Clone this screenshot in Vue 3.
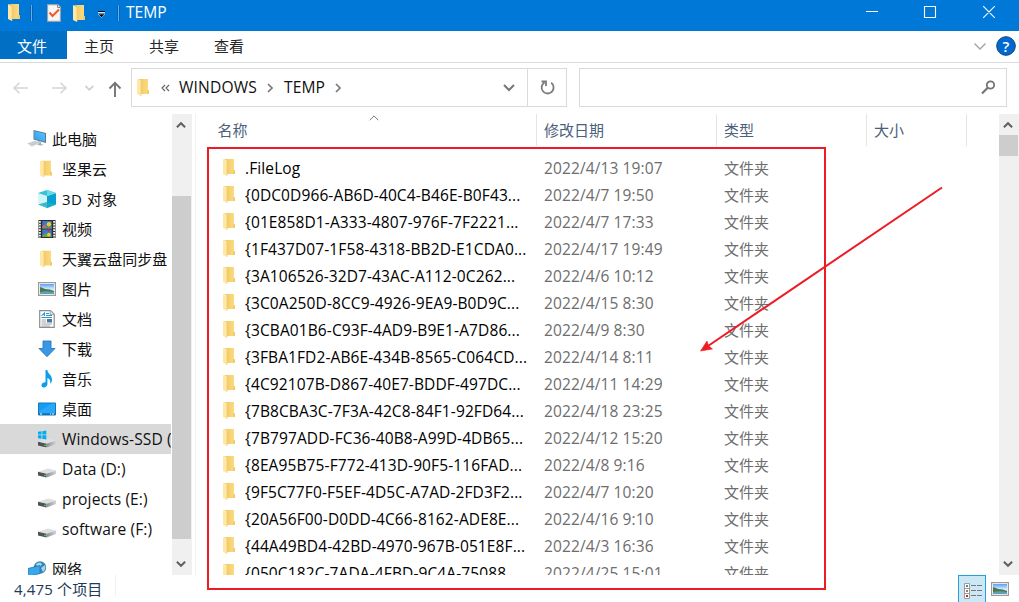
<script setup>
const tabs = ['主页', '共享', '查看']
const places = [
  { name: '坚果云', icon: 'folder' },
  { name: '3D 对象', icon: 'cube', mixed: true },
  { name: '视频', icon: 'video' },
  { name: '天翼云盘同步盘', icon: 'folder' },
  { name: '图片', icon: 'picture' },
  { name: '文档', icon: 'document' },
  { name: '下载', icon: 'download' },
  { name: '音乐', icon: 'music' },
  { name: '桌面', icon: 'desktop' },
  { name: 'Windows-SSD (C:)', icon: 'system', latin: true, active: true },
  { name: 'Data (D:)', icon: 'drive', latin: true },
  { name: 'projects (E:)', icon: 'drive', latin: true },
  { name: 'software (F:)', icon: 'drive', latin: true },
]
const files = [
  ['.FileLog', '2022/4/13 19:07'],
  ['{0DC0D966-AB6D-40C4-B46E-B0F43...', '2022/4/7 19:50'],
  ['{01E858D1-A333-4807-976F-7F2221...', '2022/4/7 17:33'],
  ['{1F437D07-1F58-4318-BB2D-E1CDA0...', '2022/4/17 19:49'],
  ['{3A106526-32D7-43AC-A112-0C262...', '2022/4/6 10:12'],
  ['{3C0A250D-8CC9-4926-9EA9-B0D9C...', '2022/4/15 8:30'],
  ['{3CBA01B6-C93F-4AD9-B9E1-A7D86...', '2022/4/9 8:30'],
  ['{3FBA1FD2-AB6E-434B-8565-C064CD...', '2022/4/14 8:11'],
  ['{4C92107B-D867-40E7-BDDF-497DC...', '2022/4/11 14:29'],
  ['{7B8CBA3C-7F3A-42C8-84F1-92FD64...', '2022/4/18 23:25'],
  ['{7B797ADD-FC36-40B8-A99D-4DB65...', '2022/4/12 15:20'],
  ['{8EA95B75-F772-413D-90F5-116FAD...', '2022/4/8 9:16'],
  ['{9F5C77F0-F5EF-4D5C-A7AD-2FD3F2...', '2022/4/7 10:20'],
  ['{20A56F00-D0DD-4C66-8162-ADE8E...', '2022/4/16 9:10'],
  ['{44A49BD4-42BD-4970-967B-051E8F...', '2022/4/3 16:36'],
  ['{050C182C-7ADA-4FBD-9C4A-75088...', '2022/4/25 15:01'],
]
</script>

<template>
  <div class="window">
    <svg class="defs" width="0" height="0">
      <defs>
        <linearGradient id="gold" x1="0" x2="1"><stop offset="0" stop-color="#efc765" /><stop offset="1" stop-color="#fddc82" /></linearGradient>
        <linearGradient id="sky" x1="0" y1="0" x2="0" y2="1"><stop offset="0" stop-color="#5f9df5" /><stop offset=".5" stop-color="#cfeafc" /><stop offset="1" stop-color="#e8f6fb" /></linearGradient>
        <linearGradient id="screen" x1="0" y1="1" x2="1" y2="0"><stop offset="0" stop-color="#2f9df4" /><stop offset="1" stop-color="#59c4ff" /></linearGradient>
        <linearGradient id="metal" x1="0" x2="1"><stop offset="0" stop-color="#8b8d90" /><stop offset="1" stop-color="#d3d4d6" /></linearGradient>
        <symbol id="folder" viewBox="0 0 12 17">
          <path d="M1 0H11V11.5H12V15H4V2z" fill="url(#gold)" />
          <path d="M0 0L4 2V17L0 15z" fill="#ffe8a6" />
          <path d="M4 2V17" stroke="#edc665" stroke-width=".6" />
          <path d="M10 15V11.3H12V15z" fill="#f2cb68" />
        </symbol>
        <symbol id="cube" viewBox="0 0 18 18">
          <path d="M0 3L9 6V18L0 14.5z" fill="#a9e9ee" /><path d="M0 3L9 6V12L0 14.5z" fill="#d4f5f5" />
          <path d="M9 6L18 3V14.5L9 18z" fill="#0a9fd0" /><path d="M9 12L18 14.5L9 18L0 14.5z" fill="#1cafc0" opacity=".8" />
          <path d="M0 3L9 0L18 3L9 6z" fill="#36c3d4" /><path d="M9 6L9 0L18 3z" fill="#66dbe6" />
        </symbol>
        <symbol id="video" viewBox="0 0 18 19">
          <path d="M0 0H18V19H0z" fill="#2d2d2d" />
          <path d="M1.5 1V19M16.5 1V19" stroke="#eee" stroke-width="2" stroke-dasharray="1.8 1.1" />
          <path d="M4 1H14V9H4zM4 10H14V18H4z" fill="#3977d5" />
          <path d="M4 7Q7 3 9 8L14 7V9H4zM4 16L8 14L14 17V18H4z" fill="#64a63b" />
          <circle cx="11" cy="4.5" r="2.3" fill="#f5ca24" /><circle cx="6" cy="7" r="1.6" fill="#e75a66" />
          <path d="M8 10H13L11 12.5z" fill="#d52b20" /><circle cx="11" cy="15.5" r="2" fill="#e8c634" />
        </symbol>
        <symbol id="picture" viewBox="0 0 18 14">
          <path d="M.6 .6H17.4V13.4H.6z" fill="#fff" stroke="#9a9a9a" stroke-width="1.2" />
          <path d="M2 2H16V12H2z" fill="url(#sky)" />
          <path d="M2 5Q5 6 7 7Q12 7 16 9V10L2 10.5z" fill="#49784d" />
          <path d="M2 10Q9 8.5 16 10V12H2z" fill="#609fb8" />
        </symbol>
        <symbol id="document" viewBox="0 0 16 18">
          <path d="M.7 .7H11.5L15.2 4.2V17.3H.7z" fill="#fff" stroke="#8d8d8d" stroke-width="1.2" />
          <path d="M11 .5V4.5H15" fill="#ddd" stroke="#999" stroke-width=".8" />
          <path d="M2.5 6L5.5 2.5V6M3.7 4.7H5.5M7 3.5H10M7 5.5H13M2.5 7.5H13" fill="none" stroke="#2d94d1" />
          <path d="M2.5 10H7M2.5 12H7M2.5 14H13M2.5 16H11" stroke="#999" stroke-width=".9" /><path d="M8 9H13V12.5H8z" fill="#4778a5" />
        </symbol>
        <symbol id="download" viewBox="0 0 18 17"><path d="M5 .5H13V8H17L9 16.2L1 8H5z" fill="#3b96e4" stroke="#2879c1" stroke-width=".9" /></symbol>
        <symbol id="music" viewBox="0 0 18 18"><path d="M7.5 0H9.3C9.8 4 14 5 14 9.5C14 11.5 13.3 13 12.2 13.8C12.8 10.5 11.5 8.5 9.4 8V14C9.4 16 7.5 17.5 5.8 17.5C2.6 17.5 2.4 12.3 7.5 12.2z" fill="#0d9de9" /></symbol>
        <symbol id="desktop" viewBox="0 0 18 13"><path d="M.5 .5H17.5V12.5H.5z" fill="#159cf5" stroke="#1677b5" /><path d="M1 9L14 1H17V11H1z" fill="#38aef9" opacity=".65" /><path d="M1 11.5H17" stroke="#075d99" /><path d="M2 11.5H4M12 11.5H13M14 11.5H16" stroke="#fff" /></symbol>
        <symbol id="drive" viewBox="0 0 18 17">
          <path d="M0 11.3L10 8L18 10L8.5 13.2z" fill="#dedfe1" /><path d="M0 11.3L8.5 13.2V17L0 15z" fill="#505154" />
          <path d="M8.5 13.2L18 10V13.6L8.5 17z" fill="url(#metal)" /><path d="M6 14.3H8V15.6H6z" fill="#36ce5b" />
        </symbol>
        <symbol id="system" viewBox="0 0 18 17"><use href="#drive" width="18" height="17" /><path d="M0 1.3L3.5 .8V4H0zM4.3 .7L8.3 0V4H4.3zM0 4.8H3.5V8.2L0 7.7zM4.3 4.8H8.3V9L4.3 8.3z" fill="#00adef" /></symbol>
        <symbol id="pc" viewBox="0 0 20 18">
          <path d="M6.5 0L19 3V13L6.5 9.5z" fill="#65747f" /><path d="M7.3 1L18 3.7V11.8L7.3 8.8z" fill="url(#screen)" />
          <path d="M11 11L14 12V14L17 15L13 15.5L9 14L11 13z" fill="#a5b0b8" /><path d="M0 13.5L9 10.5L13 13L5 16.7z" fill="#d0d8dd" /><path d="M2 13.5L9 11.5M4 15L11 12.5" stroke="#9caab1" stroke-width=".6" stroke-dasharray="1 .5" />
        </symbol>
        <symbol id="network" viewBox="0 0 18 17">
          <circle cx="12" cy="6.5" r="6.2" fill="#3c83b3" /><path d="M8 3Q12 0 14 3L12 6L9 5zM13 7L17 4Q18.5 8 15 11z" fill="#a5d5e6" />
          <path d="M0 7.5L12 4.5V12.5L0 15.5z" fill="#39a7ec" stroke="#1878b5" stroke-width=".8" /><path d="M4 15L8 14V16L4 16.5z" fill="#8197a4" />
        </symbol>
        <symbol id="up" viewBox="0 0 10 8"><path d="M.9 6.3L5 2.2L9.1 6.3" fill="none" stroke="#606060" stroke-width="2" /></symbol>
        <symbol id="down" viewBox="0 0 10 8"><path d="M.9 1.7L5 5.8L9.1 1.7" fill="none" stroke="#606060" stroke-width="2" /></symbol>
      </defs>
    </svg>

    <header class="titlebar">
      <svg class="quick" width="124" height="31" viewBox="0 0 124 31">
        <use href="#folder" x="8" y="4" width="12" height="17" />
        <path d="M31.5 5V21M118.5 5V21" stroke="#064f96" stroke-width="2" /><path d="M31.5 5V21M118.5 5V21" stroke="#69ade8" />
        <path d="M47.6 4.6H58L60.4 7V21.4H47.6z" fill="#f7f7f7" stroke="#9ba2a8" stroke-width="1.1" /><path d="M57.5 5V7.5H60" fill="none" stroke="#888" />
        <path d="M49.5 12.5L52.5 16L59 9.5" fill="none" stroke="#f15a22" stroke-width="2" />
        <use href="#folder" x="73" y="5" width="12" height="17" />
        <path d="M98 11.5H105" stroke="#000" /><path d="M98 12.5H105" stroke="#fff" opacity=".8" /><path d="M98 14H105L101.5 17.5z" fill="#000" stroke="#fff" stroke-width=".5" />
      </svg>
      <span class="title">TEMP</span>
      <svg class="controls" width="154" height="31" viewBox="865 0 154 31" fill="none" stroke="#fff" stroke-width="1.1">
        <path d="M866 11.5H878M924.5 6.5H935.5V17.5H924.5zM983.2 6.2L994.8 17.8M994.8 6.2L983.2 17.8" />
      </svg>
    </header>

    <nav class="ribbon">
      <span class="file-tab">文件</span>
      <span v-for="tab in tabs" :key="tab" class="tab">{{ tab }}</span>
      <svg class="ribbon-end" width="49" height="31" viewBox="970 31 49 31">
        <path d="M974.5 43.5L980 49L985.5 43.5" fill="none" stroke="#a1a1a1" stroke-width="1.3" />
        <circle cx="1006" cy="46" r="9.3" fill="#0469cf" stroke="#07437d" />
        <text x="1006" y="51.5" text-anchor="middle" fill="#fff" class="help">?</text>
      </svg>
    </nav>

    <div class="navigation">
      <svg class="history" width="131" height="51" viewBox="0 63 131 51" fill="none">
        <path d="M28 88H14M19.5 82.8L14 88L19.5 93.2M52 88H66M60.5 82.8L66 88L60.5 93.2" stroke="#d5d5d5" stroke-width="1.5" />
        <path d="M85.5 86L89.3 89.8L93.2 86" stroke="#d0d0d0" stroke-width="1.8" />
        <path d="M115 97V83M109.5 88.5L115 82.8L120.5 88.5" stroke="#747474" stroke-width="1.9" />
      </svg>
      <div class="address">
        <svg class="address-folder" width="12" height="17"><use href="#folder" width="12" height="17" /></svg>
        <svg class="guillemet" width="9" height="8" viewBox="0 0 9 8"><path d="M4 1L1 4L4 7M8 1L5 4L8 7" fill="none" stroke="#666" stroke-width="1.2" /></svg>
        <span class="crumb root">WINDOWS</span>
        <svg class="chev" width="7" height="10" viewBox="0 0 7 10"><path d="M1 1L5 5L1 9" fill="none" stroke="#777" stroke-width="1.7" /></svg>
        <span class="crumb leaf">TEMP</span>
        <svg class="chev" width="7" height="10" viewBox="0 0 7 10"><path d="M1 1L5 5L1 9" fill="none" stroke="#777" stroke-width="1.7" /></svg>
        <svg class="address-down" width="12" height="8" viewBox="0 0 12 8"><path d="M1 1L6 6L11 1" fill="none" stroke="#777" stroke-width="2" /></svg>
        <div class="refresh"><svg width="16" height="17" viewBox="0 0 16 17"><path d="M11.2 3.7A6 6 0 1 1 4.5 3.4M1.5 2.5H6V7" fill="none" stroke="#7b7b7b" stroke-width="1.8" /></svg></div>
      </div>
      <div class="search">
        <svg width="15" height="15" viewBox="0 0 15 15" fill="none" stroke="#747474"><circle cx="9.5" cy="5" r="3.7" stroke-width="1.8" /><path d="M6.7 7.8L1 13.5" stroke-width="2.2" /></svg>
      </div>
    </div>

    <main class="body">
      <aside class="sidebar">
        <div class="place computer"><svg width="20" height="18"><use href="#pc" width="20" height="18" /></svg><span>此电脑</span></div>
        <div v-for="(place, i) in places" :key="i" class="place child" :class="{ active: place.active, latin: place.latin, mixed: place.mixed }">
          <svg class="place-icon" width="20" height="20" viewBox="0 0 20 20">
            <use :href="'#' + place.icon" :x="place.icon === 'folder' ? 3 : 1" :y="place.icon === 'folder' ? 1.5 : 1" :width="place.icon === 'folder' ? 12 : 18" :height="place.icon === 'folder' ? 17 : 18" />
          </svg>
          <span>{{ place.name }}</span>
        </div>
        <div class="place network"><svg width="18" height="17"><use href="#network" width="18" height="17" /></svg><span>网络</span></div>
      </aside>
      <div class="scroll side-scroll"><svg width="10" height="8"><use href="#up" width="10" height="8" /></svg><i class="thumb"></i><svg width="10" height="8"><use href="#down" width="10" height="8" /></svg></div>
      <section class="listing">
        <div class="columns">
          <span class="column name">名称<svg class="sort" width="10" height="6" viewBox="0 0 10 6"><path d="M.7 5.2L5 .9L9.3 5.2" fill="none" stroke="#777" /></svg></span>
          <span class="column">修改日期</span><span class="column">类型</span><span class="column">大小</span>
        </div>
        <div class="rows">
          <div v-for="file in files" :key="file[0]" class="row">
            <svg width="12" height="17"><use href="#folder" width="12" height="17" /></svg>
            <span class="filename">{{ file[0] }}</span><span class="date">{{ file[1] }}</span><span class="type">文件夹</span>
          </div>
        </div>
      </section>
      <div class="scroll list-scroll"><svg width="10" height="8"><use href="#up" width="10" height="8" /></svg><i class="thumb"></i><svg width="10" height="8"><use href="#down" width="10" height="8" /></svg></div>
    </main>

    <footer class="status">
      <span class="count">4,475 个项目</span>
      <span class="view selected"><svg width="18" height="17" viewBox="0 0 18 17">
        <path d="M.5 .5H5.5V15.5H.5zM.5 5.5H5.5M.5 10.5H5.5" fill="#fff" stroke="#9c9c9c" /><path d="M7 2.5H12M13 2.5H18M7 7.5H12M13 7.5H18M7 12.5H12M13 12.5H18" stroke="#777" />
        <path d="M2 2H4V4H2z" fill="#4a86b8" /><path d="M2 7H4V9H2z" fill="#b17855" /><path d="M2 12H4V14H2z" fill="#cf2b20" />
      </svg></span>
      <span class="view"><svg width="18" height="14"><use href="#picture" width="18" height="14" /></svg></span>
    </footer>

    <svg class="annotation" width="1019" height="602" viewBox="0 0 1019 602">
      <path d="M208 148H825V589H208z" fill="none" stroke="#ed1c24" stroke-width="2" />
      <path d="M942 187.5L708 346" stroke="#ed1c24" stroke-width="2" /><path d="M700.5 351L707 341L708.5 345.8L712.5 349z" fill="#ed1c24" stroke="#ed1c24" stroke-width=".6" />
    </svg>
  </div>
</template>

<style>
body { margin: 0; overflow: hidden; background: #fff; }
</style>

<style scoped>
.window { position: relative; width: 1019px; height: 602px; overflow: hidden; display: flex; flex-direction: column; background: #fff; color: #111; font: 15px "Open Sans", "Noto Sans CJK SC", sans-serif; }
.window * { box-sizing: border-box; }
.window svg { display: block; flex: none; }
.window .defs { position: absolute; }
.titlebar { height: 31px; flex: none; display: flex; background: #0078d7; color: #fff; }
.title { margin-left: 2px; line-height: 25px; font-size: 15.6px; }
.controls { margin-left: auto; }
.ribbon { height: 32px; flex: none; display: flex; border-bottom: 1px solid #dadbdc; line-height: 30px; color: #262626; }
.file-tab { width: 67px; height: 28px; padding-left: 17px; background: #006fc4; color: #fff; }
.tab { width: 65px; padding-left: 17px; }
.ribbon-end { margin-left: auto; }
.help { font-size: 15px; font-weight: 600; }
.navigation { height: 51px; flex: none; display: flex; }
.address { height: 39px; width: 436px; margin-top: 5px; display: flex; align-items: center; border: 1px solid #d9d9d9; }
.address-folder { margin-left: 5px; }
.guillemet { margin-left: 12px; }
.crumb { line-height: 37px; height: 37px; white-space: nowrap; font-size: 15.6px; }
.root { width: 88px; margin-left: 9px; letter-spacing: .15px; }
.leaf { width: 51px; margin-left: 10px; letter-spacing: .1px; }
.address-down { margin-left: auto; margin-right: 12px; }
.refresh { width: 39px; height: 37px; padding: 10px 0 0 12px; border-left: 1px solid #d9d9d9; }
.search { width: 428px; height: 39px; margin: 5px 0 0 12px; border: 1px solid #d9d9d9; display: flex; align-items: center; justify-content: flex-end; padding-right: 10px; }
.body { height: 461px; flex: none; display: flex; }
.sidebar { width: 171px; height: 461px; padding-top: 10px; overflow: hidden; }
.place { height: 30px; display: flex; align-items: center; white-space: nowrap; line-height: 30px; overflow: hidden; letter-spacing: .05px; }
.computer { padding-left: 27px; gap: 5px; }
.child { padding-left: 37px; gap: 5px; }
.latin { font-size: 15.6px; letter-spacing: .1px; }
.mixed { letter-spacing: .45px; }
.active { background: #d9d9d9; }
.network { margin-top: 10px; padding-left: 28px; gap: 6px; }
.scroll { flex: none; display: flex; flex-direction: column; align-items: flex-start; background: #f0f0f0; padding: 7px 0; justify-content: space-between; }
.scroll svg { margin-left: 4px; }
.side-scroll { width: 20px; margin-left: 1px; }
.thumb { width: 19px; background: #cdcdcd; }
.side-scroll .thumb { height: 343px; margin-top: 67px; margin-bottom: auto; }
.list-scroll { width: 20px; }
.list-scroll .thumb { height: 21px; margin-top: 6px; margin-bottom: auto; }
.listing { width: 804px; margin-left: 3px; border-left: 1px solid #f2f2f2; display: flex; flex-direction: column; overflow: hidden; }
.columns { height: 32px; flex: none; display: grid; grid-template-columns: 341px 180px 150px 100px; color: #4c607a; line-height: 32px; }
.column { position: relative; padding-left: 7px; border-right: 1px solid #e5e5e5; }
.name { padding-left: 21.5px; }
.sort { position: absolute; left: 172.5px; top: 1px; }
.rows { padding-top: 9px; overflow: hidden; }
.row { height: 27px; display: grid; grid-template-columns: 22px 299px 180px 100px; padding-left: 27px; line-height: 27px; white-space: nowrap; }
.row svg { margin-top: 4px; }
.filename { color: #000; font-size: 15.5px; letter-spacing: .11px; }
.date { color: #6d6d6d; font-size: 15.5px; letter-spacing: .11px; }
.type { color: #6d6d6d; }
.status { flex: 1; display: flex; padding-right: 5px; color: #1e395b; line-height: 28px; }
.count { width: 116px; padding-left: 14px; margin-right: auto; border-right: 1px solid #f1f1f1; height: 21px; letter-spacing: .15px; }
.view { width: 28px; height: 28px; padding: 7px 5px; }
.selected { border: 1px solid #26a0da; background: #cce8f6; }
.annotation { position: absolute; left: 0; top: 0; pointer-events: none; }
</style>
